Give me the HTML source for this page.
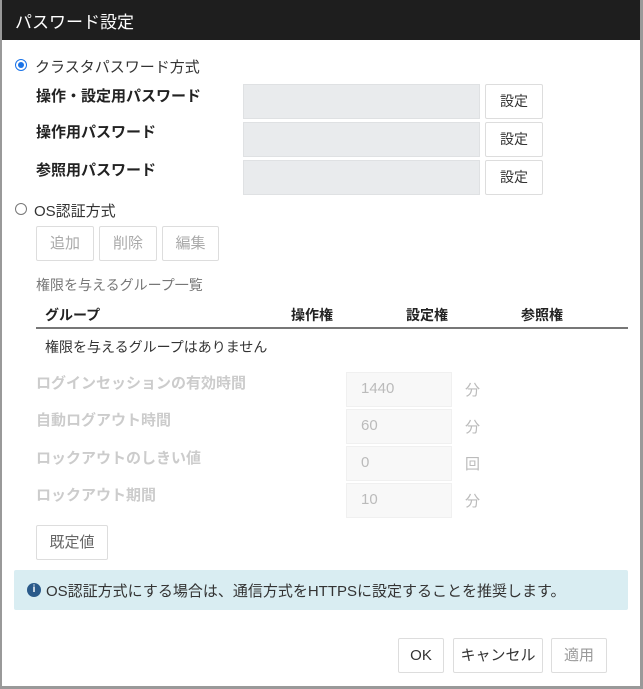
<!DOCTYPE html>
<html><head><meta charset="utf-8"><style>
*{box-sizing:border-box;margin:0;padding:0}
body{width:643px;height:689px;background:#fff;font-family:"Liberation Sans","Noto Sans CJK JP",sans-serif;position:relative;overflow:hidden;color:#333}
.a{position:absolute;white-space:nowrap}
.frame{position:absolute;left:0;top:0;width:643px;height:689px;border-left:2px solid #999;border-right:3px solid #999;border-bottom:3px solid #999}
.title{position:absolute;left:0;top:0;width:643px;height:40px;background:#1e1e1e;color:#fff;font-size:17px;padding:8px 15px}
.lbl{font-size:15px;font-weight:bold;color:#222}
.inp{position:absolute;background:#e9ebed;border:1px solid #dfe1e3}
.btn{position:absolute;border:1px solid #ddd;background:#fff;font-size:14px;color:#333;text-align:center;border-radius:2px}
.dis{color:#bbb}
.dl{font-size:15px;font-weight:bold;color:#ccc}
.dinp{position:absolute;background:#f8f8f8;border:1px solid #f0f0f0;font-size:15px;color:#bbb;padding:7px 14px}
.radio{position:absolute;width:12px;height:12px;border-radius:50%;border:1px solid #777;background:#fff}
</style></head><body>
<div class="title">パスワード設定</div>
<div class="frame"></div>
<div class="radio" style="left:15px;top:59px;border-color:#1a73e8"><div style="position:absolute;left:2px;top:2px;width:6px;height:6px;border-radius:50%;background:#1a73e8"></div></div>
<div class="a" style="left:35px;top:56px;font-size:15px;color:#333">クラスタパスワード方式</div>
<div class="a lbl" style="left:36px;top:85px">操作・設定用パスワード</div>
<div class="a lbl" style="left:36px;top:121px">操作用パスワード</div>
<div class="a lbl" style="left:36px;top:159px">参照用パスワード</div>
<div class="inp" style="left:243px;top:84px;width:237px;height:35px"></div>
<div class="inp" style="left:243px;top:122px;width:237px;height:35px"></div>
<div class="inp" style="left:243px;top:160px;width:237px;height:35px"></div>
<div class="btn" style="left:485px;top:84px;width:58px;height:35px;line-height:33px">設定</div>
<div class="btn" style="left:485px;top:122px;width:58px;height:35px;line-height:33px">設定</div>
<div class="btn" style="left:485px;top:160px;width:58px;height:35px;line-height:33px">設定</div>
<div class="radio" style="left:15px;top:203px"></div>
<div class="a" style="left:34px;top:200px;font-size:15px;color:#333">OS認証方式</div>
<div class="btn dis" style="left:36px;top:226px;width:58px;height:35px;line-height:33px;color:#aaa;font-size:15px">追加</div>
<div class="btn dis" style="left:99px;top:226px;width:58px;height:35px;line-height:33px;color:#aaa;font-size:15px">削除</div>
<div class="btn dis" style="left:162px;top:226px;width:57px;height:35px;line-height:33px;color:#aaa;font-size:15px">編集</div>
<div class="a" style="left:36px;top:275px;font-size:14px;color:#777">権限を与えるグループ一覧</div>
<div class="a lbl" style="left:45px;top:305px;font-size:14px">グループ</div>
<div class="a lbl" style="left:291px;top:305px;font-size:14px">操作権</div>
<div class="a lbl" style="left:406px;top:305px;font-size:14px">設定権</div>
<div class="a lbl" style="left:521px;top:305px;font-size:14px">参照権</div>
<div class="a" style="left:36px;top:327px;width:592px;height:2px;background:#777"></div>
<div class="a" style="left:45px;top:337px;font-size:14px;color:#333">権限を与えるグループはありません</div>
<div class="a dl" style="left:36px;top:372px">ログインセッションの有効時間</div>
<div class="a dl" style="left:36px;top:409px">自動ログアウト時間</div>
<div class="a dl" style="left:36px;top:447px">ロックアウトのしきい値</div>
<div class="a dl" style="left:36px;top:484px">ロックアウト期間</div>
<div class="dinp" style="left:346px;top:372px;width:106px;height:35px">1440</div>
<div class="dinp" style="left:346px;top:409px;width:106px;height:35px">60</div>
<div class="dinp" style="left:346px;top:446px;width:106px;height:35px">0</div>
<div class="dinp" style="left:346px;top:483px;width:106px;height:35px">10</div>
<div class="a dis" style="left:465px;top:379px;font-size:15px">分</div>
<div class="a dis" style="left:465px;top:416px;font-size:15px">分</div>
<div class="a dis" style="left:465px;top:453px;font-size:15px">回</div>
<div class="a dis" style="left:465px;top:490px;font-size:15px">分</div>
<div class="btn" style="left:36px;top:525px;width:72px;height:35px;line-height:33px;color:#666;font-size:15px">既定値</div>
<div class="a" style="left:14px;top:570px;width:614px;height:40px;background:#d9edf2;border-radius:2px"></div>
<div class="a" style="left:27px;top:583px;width:14px;height:14px;border-radius:50%;background:#2a5a8a;color:#fff;font-size:10px;font-weight:bold;text-align:center;line-height:14px">i</div>
<div class="a" style="left:46px;top:580px;font-size:15px;color:#333">OS認証方式にする場合は、通信方式をHTTPSに設定することを推奨します。</div>
<div class="btn" style="left:398px;top:638px;width:46px;height:35px;line-height:33px;font-size:15px">OK</div>
<div class="btn" style="left:453px;top:638px;width:90px;height:35px;line-height:33px;font-size:15px">キャンセル</div>
<div class="btn" style="left:551px;top:638px;width:56px;height:35px;line-height:33px;color:#999;font-size:15px">適用</div>
</body></html>
